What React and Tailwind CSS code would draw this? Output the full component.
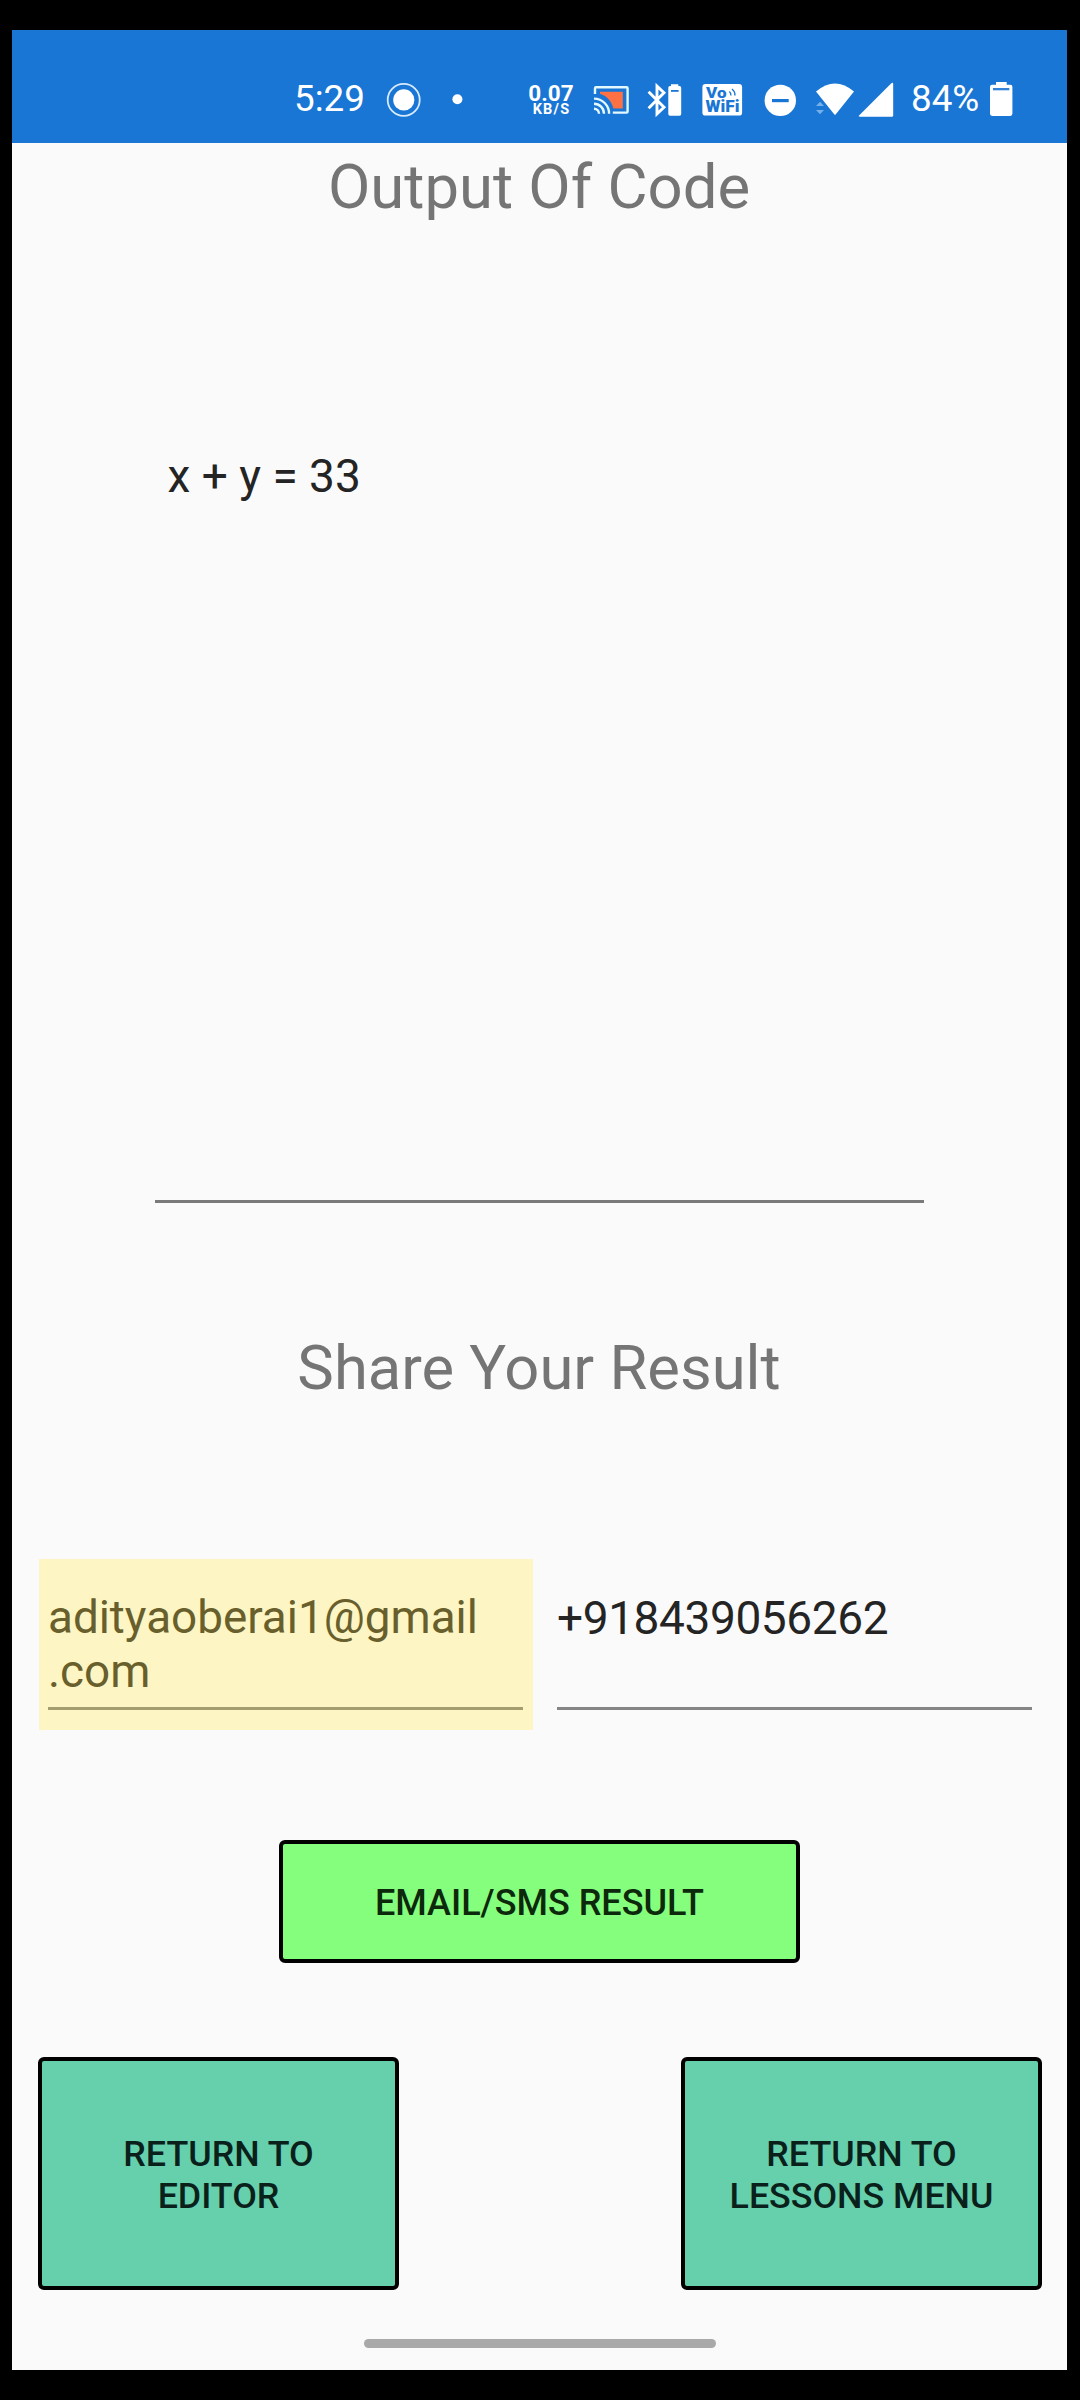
function StatusBar() {
  return (
    <header className="flex h-[113px] shrink-0 items-center bg-[#1976d5] pt-[28px] text-white [&>svg]:h-[37px] [&>svg]:shrink-0">
      <span className="mb-[5px] ml-[282px] w-[72px] text-[36.8px] leading-[37px]">5:29</span>
      <svg className="ml-[20px] w-[35px]" viewBox="386 82 35 37">
        <circle cx="403.7" cy="99.9" r="16" fill="none" stroke="#d8eafd" strokeWidth="1.8" />
        <circle cx="403.8" cy="99.9" r="10.6" fill="#fff" />
      </svg>
      <svg className="ml-[31px] w-[11px]" viewBox="452 82 11 37">
        <circle cx="457.4" cy="99.2" r="5" fill="#fff" />
      </svg>
      <div className="mb-[3px] ml-[63px] flex w-[50px] shrink-0 flex-col items-center font-bold">
        <span className="text-[22.5px] leading-[20px]">0.07</span>
        <span className="pl-[1px] text-[14.5px] leading-[13px] tracking-[1.2px]">KB/S</span>
      </div>
      <svg className="ml-[16px] w-[38px]" viewBox="592 82 38 37" fill="none">
        <path d="M600 91.7H622.8V108.5H613.4C611.5 101 606.5 95.8 600 93.8Z" fill="#ff7043" />
        <g stroke="#e3f8ff" strokeWidth="2.4">
          <path d="M595 94V88.2Q595 87.2 596 87.2H626.5Q627.6 87.2 627.6 88.2V111.500Q627.6 112.6 626.5 112.6H612.8" />
          <path d="M594 108.7A5 5 0 0 1 599 113.7" />
          <path d="M594 103.7A10 10 0 0 1 604 113.7" />
          <path d="M594 98.6A15.1 15.1 0 0 1 609.1 113.7" />
        </g>
      </svg>
      <svg className="ml-[16px] w-[38px]" viewBox="646 82 38 37">
        <path d="M648.6 91.8L664 107.3L657 113.8V86.2L664 92.7L648.6 108.2" fill="none" stroke="#fff" strokeWidth="2.9" />
        <path d="M671 84.2H678.3V86H679.5Q681.2 86 681.2 87.8V114Q681.2 115.8 679.5 115.8H670Q668.3 115.8 668.3 114V87.8Q668.3 86 670 86H671Z" fill="#fff" />
        <rect x="671" y="90" width="7.6" height="1.8" fill="#1976d5" />
      </svg>
      <svg className="ml-[18px] w-[41px]" viewBox="702 82 41 37" fontFamily="Roboto, sans-serif" fontWeight="900">
        <rect x="702.4" y="84.1" width="39.7" height="31.5" rx="3.2" fill="#fff" />
        <text x="706" y="98.200" fontSize="15" textLength="20.5" lengthAdjust="spacingAndGlyphs" fill="#1976d5">Vo</text>
        <text x="705.6" y="112.2" fontSize="16" textLength="33.8" lengthAdjust="spacingAndGlyphs" fill="#1976d5">WiFi</text>
        <path d="M729.3 91.500Q731.3 93 730.8 95.500M732 89Q735.5 92 734.8 95.500" fill="none" stroke="#1976d5" strokeWidth="1.4" />
      </svg>
      <svg className="ml-[21px] w-[33px]" viewBox="764 82 33 37">
        <circle cx="780.3" cy="100.4" r="15.7" fill="#fff" />
        <rect x="772" y="99" width="16.7" height="3.2" fill="#1976d5" />
      </svg>
      <svg className="ml-[18px] w-[79px]" viewBox="815 82 79 37">
        <path d="M816 91.6Q835 75.500 854 91.6L835.6 114.4Q835 115 834.4 114.4Z" fill="#fff" />
        <path d="M816 106L820 101.7L824 106ZM816 110L820 114.3L824 110Z" fill="#75b0ea" />
        <path d="M859.3 115.2L891.6 83Q893.2 82 893.2 84V115.2Q893.2 116.7 891.7 116.7H859.8Q858 116.500 859.3 115.2Z" fill="#fff" />
      </svg>
      <span className="mb-[5px] ml-[17px] w-[70px] text-[36.8px] leading-[37px]">84%</span>
      <svg className="ml-[8px] w-[24px]" viewBox="989 82 24 37">
        <path d="M996 82H1006.7V84.7H1010.3Q1012.4 84.7 1012.4 86.8V113.8Q1012.4 115.9 1010.3 115.9H992.1Q990 115.9 990 113.8V86.8Q990 84.7 992.1 84.7H996Z" fill="#fff" />
        <rect x="993" y="88" width="16.3" height="2.3" fill="#3583d8" />
      </svg>
    </header>
  );
}

function ReturnButton({ children }) {
  return (
    <button className="h-[233px] w-[361px] rounded-[6px] border-4 border-black bg-[#66cfac] pt-[2px] text-center text-[35.8px] leading-[42px] font-medium text-[#0a211b]">
      {children}
    </button>
  );
}

export default function App() {
  return (
    <div className="h-[2400px] w-[1080px] bg-black pt-[30px] pl-[12px] font-[Roboto,sans-serif]">
      <div className="flex h-[2340px] w-[1055px] flex-col bg-[#fafafa] text-[#242424]">
        <StatusBar />
        <h1 className="mt-[8px] pr-[1px] text-center text-[61.6px] leading-[72px] text-[#757575]">Output Of Code</h1>
        <div className="mt-[207px] h-[773px] w-[769px] self-center border-b-3 border-[#7a7a7a] pt-[19px] pl-[12.5px] text-[46px] leading-[54px]">
          x + y = 33
        </div>
        <h2 className="mt-[129px] pr-[1px] text-center text-[61.5px] leading-[72px] text-[#757575]">Share Your Result</h2>
        <div className="mt-[155px] flex h-[171px] gap-[24px] pl-[27px] text-[46px] leading-[54px]">
          <div className="w-[494px] bg-[#fdf5c3] pt-[32px] pr-[10px] pl-[9px] text-[#685f2c]">
            <div className="h-[119px] border-b-3 border-[#a39d70] text-[45.8px]">
              adityaoberai1@gmail
              <br />
              .com
            </div>
          </div>
          <div className="w-[475px] pt-[32px]">
            <div className="h-[119px] border-b-3 border-[#858585] tracking-[-0.4px]">+918439056262</div>
          </div>
        </div>
        <button className="mt-[110px] h-[123px] w-[521px] self-center rounded-[6px] border-4 border-black bg-[#85fe7e] pt-[3px] text-[36px] leading-[42px] font-medium text-[#0c290b]">
          EMAIL/SMS RESULT
        </button>
        <div className="mt-[94px] flex justify-between pr-[25px] pl-[26px]">
          <ReturnButton>
            RETURN TO
            <br />
            EDITOR
          </ReturnButton>
          <ReturnButton>
            RETURN TO
            <br />
            LESSONS MENU
          </ReturnButton>
        </div>
        <div className="mt-[49px] h-[9px] w-[352px] self-center rounded-full bg-[#a9a9a9]" />
      </div>
    </div>
  );
}
